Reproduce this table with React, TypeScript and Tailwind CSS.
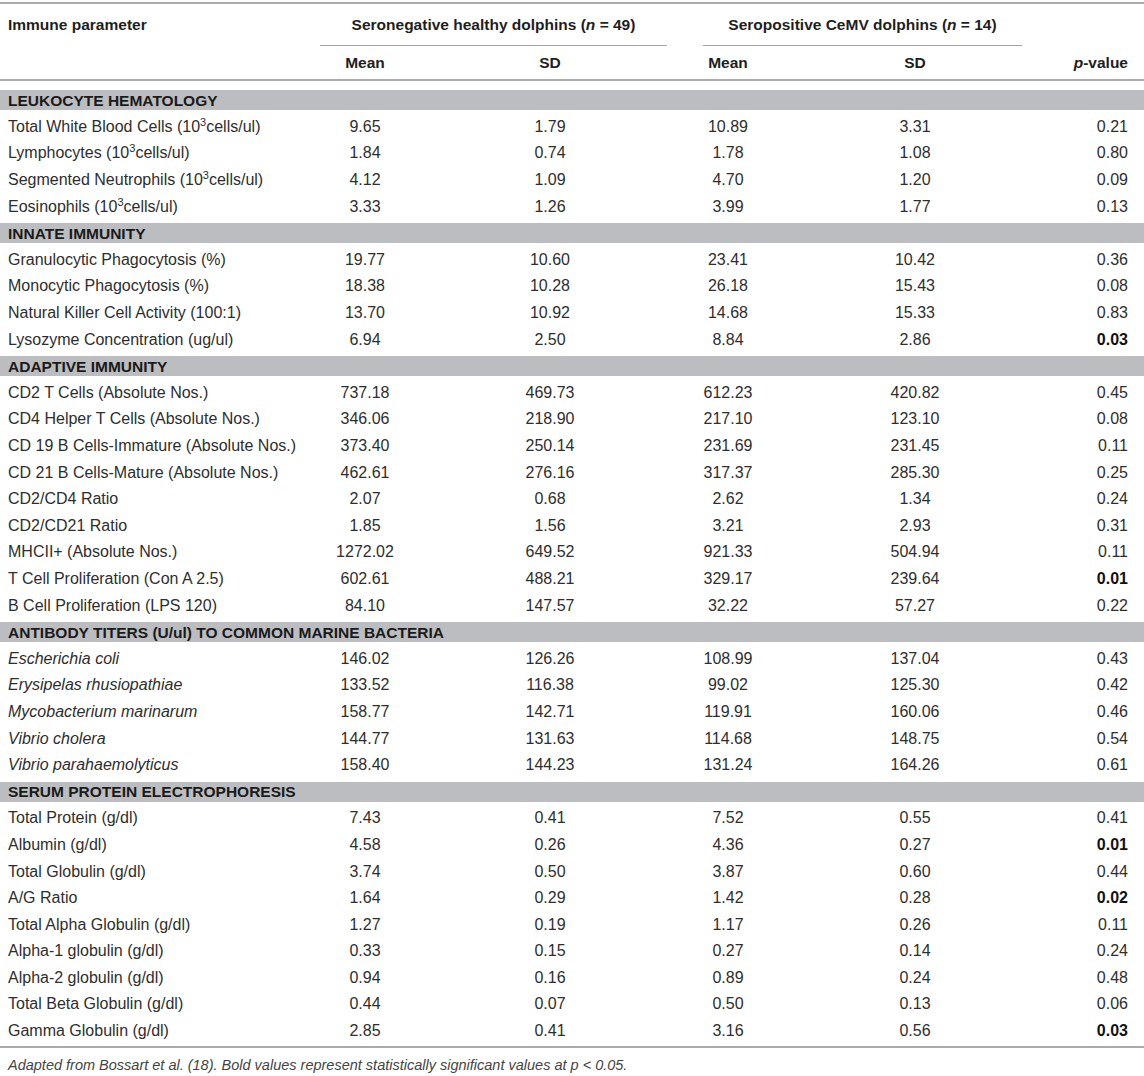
import React from "react";

type Row = { name: React.ReactNode; v: [string, string, string, string, string]; bold?: boolean };
type Section = { title: string; rows: Row[] };

const cells = (s: string) => s.split(" ") as [string, string, string, string, string];
const sup = (label: string) => (
  <>
    {label} (10<span className="text-[11px] relative -top-[6px]">3</span>cells/ul)
  </>
);
const it = (t: string) => <i>{t}</i>;

const sections: Section[] = [
  {
    title: "LEUKOCYTE HEMATOLOGY",
    rows: [
      { name: sup("Total White Blood Cells"), v: cells("9.65 1.79 10.89 3.31 0.21") },
      { name: sup("Lymphocytes"), v: cells("1.84 0.74 1.78 1.08 0.80") },
      { name: sup("Segmented Neutrophils"), v: cells("4.12 1.09 4.70 1.20 0.09") },
      { name: sup("Eosinophils"), v: cells("3.33 1.26 3.99 1.77 0.13") },
    ],
  },
  {
    title: "INNATE IMMUNITY",
    rows: [
      { name: "Granulocytic Phagocytosis (%)", v: cells("19.77 10.60 23.41 10.42 0.36") },
      { name: "Monocytic Phagocytosis (%)", v: cells("18.38 10.28 26.18 15.43 0.08") },
      { name: "Natural Killer Cell Activity (100:1)", v: cells("13.70 10.92 14.68 15.33 0.83") },
      { name: "Lysozyme Concentration (ug/ul)", v: cells("6.94 2.50 8.84 2.86 0.03"), bold: true },
    ],
  },
  {
    title: "ADAPTIVE IMMUNITY",
    rows: [
      { name: "CD2 T Cells (Absolute Nos.)", v: cells("737.18 469.73 612.23 420.82 0.45") },
      { name: "CD4 Helper T Cells (Absolute Nos.)", v: cells("346.06 218.90 217.10 123.10 0.08") },
      { name: "CD 19 B Cells-Immature (Absolute Nos.)", v: cells("373.40 250.14 231.69 231.45 0.11") },
      { name: "CD 21 B Cells-Mature (Absolute Nos.)", v: cells("462.61 276.16 317.37 285.30 0.25") },
      { name: "CD2/CD4 Ratio", v: cells("2.07 0.68 2.62 1.34 0.24") },
      { name: "CD2/CD21 Ratio", v: cells("1.85 1.56 3.21 2.93 0.31") },
      { name: "MHCII+ (Absolute Nos.)", v: cells("1272.02 649.52 921.33 504.94 0.11") },
      { name: "T Cell Proliferation (Con A 2.5)", v: cells("602.61 488.21 329.17 239.64 0.01"), bold: true },
      { name: "B Cell Proliferation (LPS 120)", v: cells("84.10 147.57 32.22 57.27 0.22") },
    ],
  },
  {
    title: "ANTIBODY TITERS (U/ul) TO COMMON MARINE BACTERIA",
    rows: [
      { name: it("Escherichia coli"), v: cells("146.02 126.26 108.99 137.04 0.43") },
      { name: it("Erysipelas rhusiopathiae"), v: cells("133.52 116.38 99.02 125.30 0.42") },
      { name: it("Mycobacterium marinarum"), v: cells("158.77 142.71 119.91 160.06 0.46") },
      { name: it("Vibrio cholera"), v: cells("144.77 131.63 114.68 148.75 0.54") },
      { name: it("Vibrio parahaemolyticus"), v: cells("158.40 144.23 131.24 164.26 0.61") },
    ],
  },
  {
    title: "SERUM PROTEIN ELECTROPHORESIS",
    rows: [
      { name: "Total Protein (g/dl)", v: cells("7.43 0.41 7.52 0.55 0.41") },
      { name: "Albumin (g/dl)", v: cells("4.58 0.26 4.36 0.27 0.01"), bold: true },
      { name: "Total Globulin (g/dl)", v: cells("3.74 0.50 3.87 0.60 0.44") },
      { name: "A/G Ratio", v: cells("1.64 0.29 1.42 0.28 0.02"), bold: true },
      { name: "Total Alpha Globulin (g/dl)", v: cells("1.27 0.19 1.17 0.26 0.11") },
      { name: "Alpha-1 globulin (g/dl)", v: cells("0.33 0.15 0.27 0.14 0.24") },
      { name: "Alpha-2 globulin (g/dl)", v: cells("0.94 0.16 0.89 0.24 0.48") },
      { name: "Total Beta Globulin (g/dl)", v: cells("0.44 0.07 0.50 0.13 0.06") },
      { name: "Gamma Globulin (g/dl)", v: cells("2.85 0.41 3.16 0.56 0.03"), bold: true },
    ],
  },
];

const grid = "grid grid-cols-[316px_98px_272px_84px_290px_84px]";

export default function App() {
  return (
    <div
      className="w-[1144px] h-[1076px] bg-white text-[#2e2e2e] overflow-hidden"
      style={{ fontFamily: '"Liberation Sans", Arial, Helvetica, sans-serif' }}
    >
      <div className="h-[2px]" />
      <div className="border-t-2 border-[#ababab]" />
      {/* header row 1 */}
      <div className={`${grid} h-[42px] items-center font-bold text-[15.5px] text-[#1e1e1e]`}>
        <div className="pl-[8px] whitespace-nowrap">Immune parameter</div>
        <div className="col-span-2 h-full flex flex-col pl-[4px] pr-[19px]">
          <div className="flex-1 flex items-center justify-center whitespace-nowrap">
            Seronegative healthy dolphins (<i>n</i>&nbsp;=&nbsp;49)
          </div>
          <div className="border-b border-[#a6a6a6]" />
        </div>
        <div className="col-span-2 h-full flex flex-col pl-[17px] pr-[38px]">
          <div className="flex-1 flex items-center justify-center whitespace-nowrap">
            Seropositive CeMV dolphins (<i>n</i>&nbsp;=&nbsp;14)
          </div>
          <div className="border-b border-[#a6a6a6]" />
        </div>
        <div />
      </div>
      {/* header row 2 */}
      <div className={`${grid} h-[33px] items-center font-bold text-[15.5px] text-[#1e1e1e]`}>
        <div />
        <div className="text-center">Mean</div>
        <div className="text-center">SD</div>
        <div className="text-center">Mean</div>
        <div className="text-center">SD</div>
        <div className="text-right pr-[16px] whitespace-nowrap">
          <i>p</i>-value
        </div>
      </div>
      <div className="border-t-2 border-[#ababab]" />
      <div className="h-[6px]" />
      {sections.map((s) => (
        <div key={s.title}>
          <div className="h-[26.6px] flex items-center">
            <div className="w-full h-[20px] bg-[#bcbdc0] flex items-center pl-[8px] font-bold text-[15.5px] text-[#1a1a1a] whitespace-nowrap">
              {s.title}
            </div>
          </div>
          {s.rows.map((r, i) => (
            <div key={i} className={`${grid} h-[26.6px] items-center text-[16px] text-[#2e2e2e]`}>
              <div className="pl-[8px] whitespace-nowrap">{r.name}</div>
              <div className="text-center">{r.v[0]}</div>
              <div className="text-center">{r.v[1]}</div>
              <div className="text-center">{r.v[2]}</div>
              <div className="text-center">{r.v[3]}</div>
              <div className={`text-right pr-[16px] ${r.bold ? "font-bold text-[#111]" : ""}`}>{r.v[4]}</div>
            </div>
          ))}
        </div>
      ))}
      <div className="h-[2px]" />
      <div className="border-t-2 border-[#ababab]" />
      <div className="pl-[8px] pt-[7px] text-[14.5px] italic text-[#444] whitespace-nowrap">
        Adapted from Bossart et al. (18). Bold values represent statistically significant values at p &lt; 0.05.
      </div>
    </div>
  );
}
